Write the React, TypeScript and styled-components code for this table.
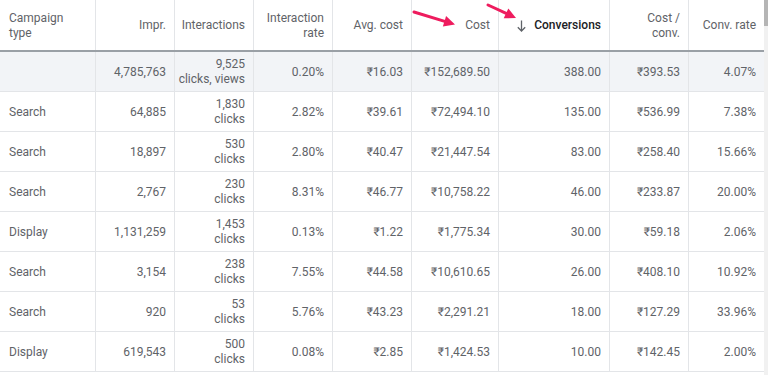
import React from "react";
import styled, { createGlobalStyle } from "styled-components";

const GlobalStyle = createGlobalStyle`
  html, body {
    margin: 0;
    padding: 0;
    background: #fff;
    overflow: hidden;
  }
  body {
    font-family: Roboto, "Liberation Sans", Arial, sans-serif;
  }
`;

const COLS = "95px 79px 79px 79px 79px 87px 111px 79px 76px";

const Page = styled.div`
  display: flex;
  width: 768px;
  height: 375px;
  overflow: hidden;
`;

const Table = styled.div`
  position: relative;
  width: 764px;
  flex: none;
`;

const Row = styled.div<{ $head?: boolean; $total?: boolean }>`
  display: grid;
  grid-template-columns: ${COLS};
  height: ${(p) => (p.$head ? "50px" : "39px")};
  border-bottom: ${(p) => (p.$head ? "2px solid #9aa0a6" : "1px solid #e3e5e8")};
  background: ${(p) => (p.$total ? "#f2f4f7" : "#fff")};
`;

const Cell = styled.div<{ $left?: boolean }>`
  display: flex;
  align-items: center;
  justify-content: ${(p) => (p.$left ? "flex-start" : "flex-end")};
  text-align: ${(p) => (p.$left ? "left" : "right")};
  padding: ${(p) => (p.$left ? "1px 8px 0 9px" : "1px 8px 0")};
  font-size: 12px;
  line-height: 15px;
  color: #5f6368;
  white-space: nowrap;
  min-width: 0;

  & + & {
    border-left: 1px solid #e3e5e8;
  }
`;

const SortHead = styled.span`
  display: inline-flex;
  align-items: center;
  gap: 8px;
  color: #202124;
  font-weight: 500;
`;

const Scrollbar = styled.div`
  width: 4px;
  flex: none;
  background: #f1f1f1;
  display: flex;
  flex-direction: column;
`;

const Thumb = styled.div`
  height: 26px;
  background: #b5b5b5;
`;

const Overlay = styled.svg`
  position: absolute;
  left: 0;
  top: 0;
  pointer-events: none;
`;

const heads = [
  ["Campaign", "type"],
  ["Impr."],
  ["Interactions"],
  ["Interaction", "rate"],
  ["Avg. cost"],
  ["Cost"],
  null,
  ["Cost /", "conv."],
  ["Conv. rate"],
];

const total = ["", "4,785,763", "9,525|clicks, views", "0.20%", "₹16.03", "₹152,689.50", "388.00", "₹393.53", "4.07%"];

const rows = [
  ["Search", "64,885", "1,830|clicks", "2.82%", "₹39.61", "₹72,494.10", "135.00", "₹536.99", "7.38%"],
  ["Search", "18,897", "530|clicks", "2.80%", "₹40.47", "₹21,447.54", "83.00", "₹258.40", "15.66%"],
  ["Search", "2,767", "230|clicks", "8.31%", "₹46.77", "₹10,758.22", "46.00", "₹233.87", "20.00%"],
  ["Display", "1,131,259", "1,453|clicks", "0.13%", "₹1.22", "₹1,775.34", "30.00", "₹59.18", "2.06%"],
  ["Search", "3,154", "238|clicks", "7.55%", "₹44.58", "₹10,610.65", "26.00", "₹408.10", "10.92%"],
  ["Search", "920", "53|clicks", "5.76%", "₹43.23", "₹2,291.21", "18.00", "₹127.29", "33.96%"],
  ["Display", "619,543", "500|clicks", "0.08%", "₹2.85", "₹1,424.53", "10.00", "₹142.45", "2.00%"],
];

const Lines = ({ text }: { text: string }) => (
  <span>
    {text.split("|").map((t, i) => (
      <React.Fragment key={i}>
        {i > 0 && <br />}
        {t}
      </React.Fragment>
    ))}
  </span>
);

const ArrowDown = () => (
  <svg width="9" height="12" viewBox="0 0 9 12" fill="none" stroke="#5f6368" strokeWidth="1.3">
    <path d="M4.5 0.5V11M0.8 7.2L4.5 11L8.2 7.2" />
  </svg>
);

// the two pink pointer arrows drawn on top of the header
const Pointer = ({ x1, y1, x2, y2 }: { x1: number; y1: number; x2: number; y2: number }) => {
  const a = Math.atan2(y2 - y1, x2 - x1);
  const len = 11;
  const half = 5.5;
  const bx = x2 - len * Math.cos(a);
  const by = y2 - len * Math.sin(a);
  const px = -Math.sin(a) * half;
  const py = Math.cos(a) * half;
  return (
    <g fill="#ee1c5e" stroke="#ee1c5e">
      <line x1={x1} y1={y1} x2={bx + 2 * Math.cos(a)} y2={by + 2 * Math.sin(a)} strokeWidth={3} strokeLinecap="round" />
      <polygon points={`${x2},${y2} ${bx + px},${by + py} ${bx - px},${by - py}`} stroke="none" />
    </g>
  );
};

export default function App() {
  return (
    <Page>
      <GlobalStyle />
      <Table>
        <Row $head>
          {heads.map((h, i) =>
            h ? (
              <Cell key={i} $left={i === 0}>
                <Lines text={h.join("|")} />
              </Cell>
            ) : (
              <Cell key={i}>
                <SortHead>
                  <ArrowDown />
                  Conversions
                </SortHead>
              </Cell>
            )
          )}
        </Row>
        <Row $total>
          {total.map((v, i) => (
            <Cell key={i} $left={i === 0}>
              <Lines text={v} />
            </Cell>
          ))}
        </Row>
        {rows.map((r, ri) => (
          <Row key={ri}>
            {r.map((v, i) => (
              <Cell key={i} $left={i === 0}>
                <Lines text={v} />
              </Cell>
            ))}
          </Row>
        ))}
        <Overlay width="764" height="50">
          <Pointer x1={414} y1={12} x2={455} y2={24.5} />
          <Pointer x1={488} y1={5} x2={516} y2={18} />
        </Overlay>
      </Table>
      <Scrollbar>
        <Thumb />
      </Scrollbar>
    </Page>
  );
}
